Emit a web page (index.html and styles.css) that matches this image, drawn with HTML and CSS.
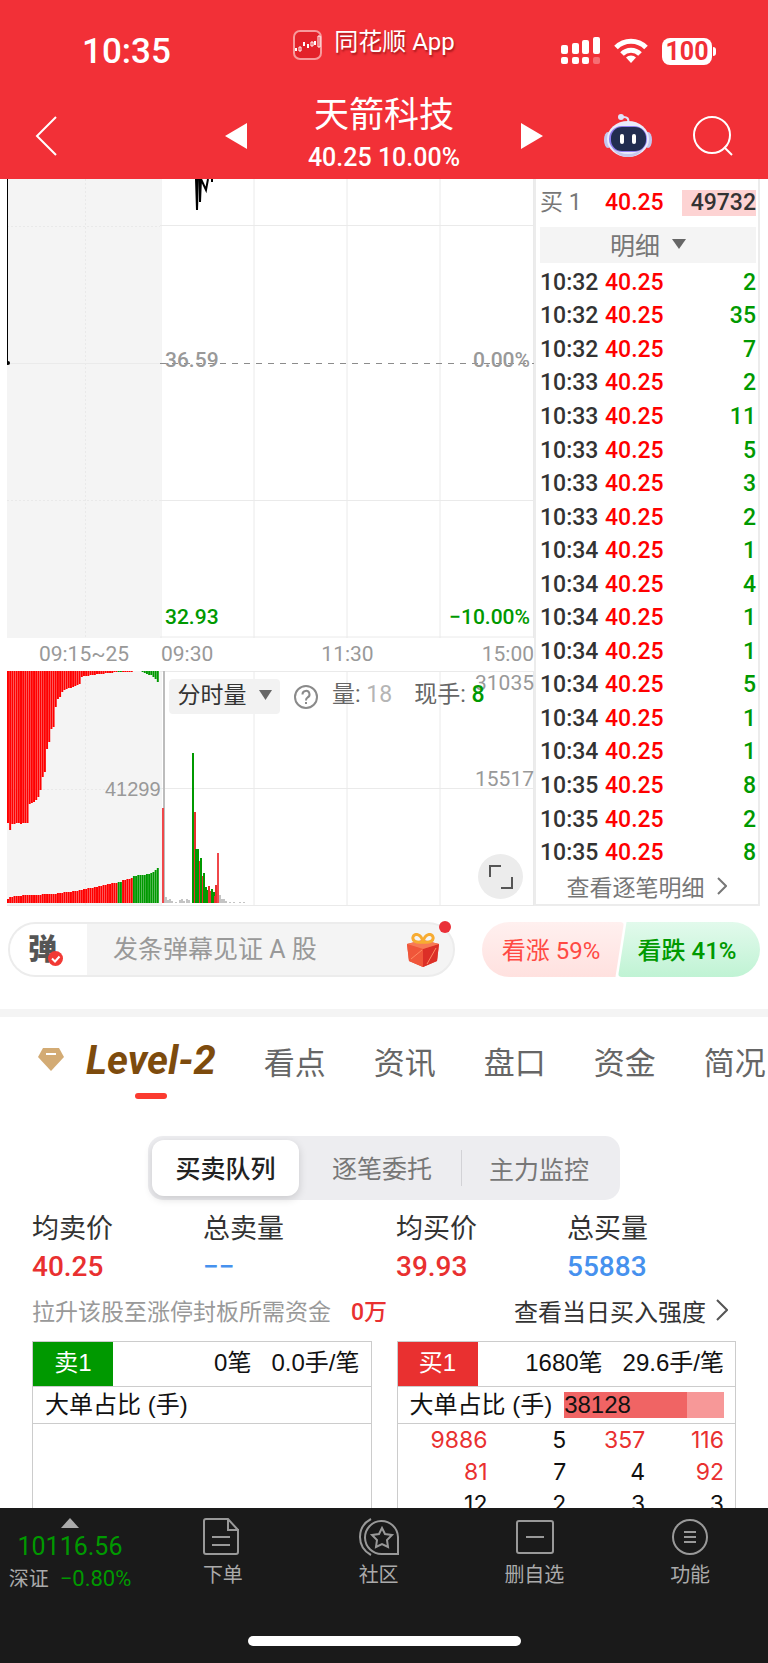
FILE: index.html
```html
<!DOCTYPE html>
<html lang="zh-CN">
<head>
    <meta charset="UTF-8">
    <meta name="viewport" content="width=device-width, initial-scale=1.0">
    <title>天箭科技</title>
    <link rel="stylesheet" href="styles.css">
</head>
<body>
<header class="top">
    <div class="status">
        <span class="clock">10:35</span>
        <span class="brand">
            <svg width="29" height="30" viewBox="0 0 29 30">
                <rect x="1" y="1" width="27" height="28" rx="6" fill="#e3222a" stroke="#f79a9c" stroke-width="2"/>
                <path d="M3 18v3M11 12v4M15 14v4M22 11v4" stroke="#fff" stroke-width="2"/>
                <path d="M6 17h2v4H6zM18 12h2v4h-2zM25 6h2v11h-2z" fill="none" stroke="#fff"/>
            </svg>
            <span>同花顺 App</span>
        </span>
        <span class="signals">
            <svg width="39" height="28" viewBox="0 0 39 28" fill="#fff">
                <rect x="0" y="8" width="7" height="9" rx="2"/>
                <rect x="11" y="6" width="7" height="11" rx="2"/>
                <rect x="21" y="3" width="7" height="14" rx="2"/>
                <rect x="32" y="0" width="7" height="17" rx="2"/>
                <rect x="0" y="20" width="7" height="7" rx="2"/>
                <rect x="11" y="20" width="7" height="7" rx="2"/>
                <rect x="21" y="20" width="7" height="7" rx="2"/>
                <rect x="32" y="20" width="7" height="7" rx="2" opacity=".3"/>
            </svg>
            <svg width="34" height="26" viewBox="0 0 34 26" fill="none" stroke="#fff" stroke-width="5">
                <path d="M2 9.500a21 21 0 0 1 30 0"/>
                <path d="M8 16a12.500 12.500 0 0 1 18 0"/>
                <path d="M17 25l-5-5.500a7 7 0 0 1 10 0z" fill="#fff" stroke="none"/>
            </svg>
            <span class="battery">100</span>
        </span>
    </div>
    <div class="titlebar">
        <button class="back" aria-label="返回">
            <svg width="24" height="40" viewBox="0 0 24 40" fill="none" stroke="#fff" stroke-width="2"><path d="M21 1L2 20l19 19"/></svg>
        </button>
        <div class="stock">
            <button aria-label="上一只"><svg width="22" height="26" viewBox="0 0 22 26" fill="#fff"><path d="M22 0v26L0 13z"/></svg></button>
            <div>
                <h1>天箭科技</h1>
                <p>40.25 10.00%</p>
            </div>
            <button aria-label="下一只"><svg width="22" height="26" viewBox="0 0 22 26" fill="#fff"><path d="M0 0v26l22-13z"/></svg></button>
        </div>
        <div class="tools">
            <button aria-label="助手">
                <svg width="48" height="44" viewBox="0 0 48 44">
                    <path d="M18 3q8-1 6 7" fill="none" stroke="#dfe3fa" stroke-width="2"/>
                    <circle cx="17" cy="3" r="3" fill="#dfe3fa"/>
                    <ellipse cx="4" cy="26" rx="4" ry="8" fill="#c3c6ee"/>
                    <ellipse cx="44" cy="26" rx="4" ry="8" fill="#c3c6ee"/>
                    <ellipse cx="24" cy="25" rx="21" ry="18" fill="#e9ebfb"/>
                    <path d="M8 34q16 12 32 0-6 9-16 9T8 34" fill="#c5c9ee"/>
                    <rect x="5" y="12" width="38" height="26" rx="13" fill="#8d7df0"/>
                    <rect x="7" y="13" width="35" height="24" rx="11" fill="#222d50"/>
                    <rect x="16" y="20" width="4" height="10" rx="2" fill="#fff"/>
                    <rect x="28" y="20" width="4" height="10" rx="2" fill="#fff"/>
                </svg>
            </button>
            <button aria-label="搜索">
                <svg width="40" height="40" viewBox="0 0 40 40" fill="none" stroke="#fff" stroke-width="2"><circle cx="19" cy="19" r="18"/><path d="M31 31l8 8"/></svg>
            </button>
        </div>
    </div>
</header>

<main>
    <section class="market">
        <div class="charts">
            <div class="price-chart">
                <svg viewBox="0 0 527 459" preserveAspectRatio="none">
                    <rect width="153" height="459" fill="#f4f4f4"/>
                    <g stroke="#e9e9e9" stroke-dasharray="2 2">
                        <path d="M78.500 0v459M0 47.500h153M0 321.500h153"/>
                    </g>
                    <g stroke="#eaeaea">
                        <path d="M0 184.500h153M153 46.500h374M153 321.500h374M153 458h374" />
                        <path d="M154 0v459M247 0v459M340 0v459M433 0v459M526.500 0v459"/>
                    </g>
                    <path d="M153 184.500h374" stroke="#8c8c8c" stroke-dasharray="6 6"/>
                    <path d="M.500 0v184" stroke="#000"/>
                    <circle cx="1" cy="184" r="2"/>
                    <path d="M189 0l1 31 1-31 2 0 0 23 1-23 5 11 2-11M205 0v3" fill="none" stroke="#000" stroke-width="2"/>
                </svg>
                <span class="label mid-left">36.59</span>
                <span class="label mid-right">0.00%</span>
                <span class="label low-left">32.93</span>
                <span class="label low-right">−10.00%</span>
            </div>
            <div class="axis">
                <span class="auction">09:15~25</span>
                <span class="session"><span>09:30</span><span>11:30</span><span>15:00</span></span>
            </div>
            <div class="volume-chart">
                <svg id="volume" viewBox="0 0 527 235" preserveAspectRatio="none">
                    <rect width="153" height="235" fill="#f4f4f4"/>
                    <path d="M78.500 0v235M0 118.500h153" stroke="#e9e9e9" stroke-dasharray="2 2"/>
                    <path d="M154 0v235M247 0v235M340 0v235M433 0v235M526.500 0v235M153 .500h374M153 117.500h374M0 234.500h527" stroke="#eaeaea"/>
                    <path d="M157 0v232" stroke="#bdbdbd" stroke-width="2"/>
                </svg>
                <span class="vol-auction">41299</span>
                <span class="vol-max">31035</span>
                <span class="vol-half">15517</span>
                <div class="vol-tools">
                    <button class="picker">分时量 <svg width="13" height="10" viewBox="0 0 13 10"><path d="M0 0h13L6.500 10z" fill="#666"/></svg></button>
                    <svg width="24" height="24" viewBox="0 0 24 24" fill="none" stroke="#8a8a8a" stroke-width="2">
                        <circle cx="12" cy="12" r="11"/>
                        <path d="M8.500 9.500a3.500 3.500 0 1 1 5 3q-1.500 1-1.500 3M12 17v2"/>
                    </svg>
                    <span class="vol-now">量: <i>18</i></span>
                    <span>现手: <b>8</b></span>
                </div>
                <button class="expand" aria-label="全屏">
                    <svg width="24" height="24" viewBox="0 0 24 24" fill="none" stroke="#555" stroke-width="2"><path d="M1 12V1h11M23 12v11H12"/></svg>
                </button>
            </div>
        </div>

        <aside class="quotes">
            <div class="bid"><span>买 1</span><b>40.25</b><span class="bid-qty">49732</span></div>
            <button class="detail">明细 <svg width="14" height="10" viewBox="0 0 14 10"><path d="M0 0h14L7 10z" fill="#666"/></svg></button>
            <table class="ticks">
                <tbody>
                <tr><td>10:32</td><td>40.25</td><td>2</td></tr>
                <tr><td>10:32</td><td>40.25</td><td>35</td></tr>
                <tr><td>10:32</td><td>40.25</td><td>7</td></tr>
                <tr><td>10:33</td><td>40.25</td><td>2</td></tr>
                <tr><td>10:33</td><td>40.25</td><td>11</td></tr>
                <tr><td>10:33</td><td>40.25</td><td>5</td></tr>
                <tr><td>10:33</td><td>40.25</td><td>3</td></tr>
                <tr><td>10:33</td><td>40.25</td><td>2</td></tr>
                <tr><td>10:34</td><td>40.25</td><td>1</td></tr>
                <tr><td>10:34</td><td>40.25</td><td>4</td></tr>
                <tr><td>10:34</td><td>40.25</td><td>1</td></tr>
                <tr><td>10:34</td><td>40.25</td><td>1</td></tr>
                <tr><td>10:34</td><td>40.25</td><td>5</td></tr>
                <tr><td>10:34</td><td>40.25</td><td>1</td></tr>
                <tr><td>10:34</td><td>40.25</td><td>1</td></tr>
                <tr><td>10:35</td><td>40.25</td><td>8</td></tr>
                <tr><td>10:35</td><td>40.25</td><td>2</td></tr>
                <tr><td>10:35</td><td>40.25</td><td>8</td></tr>
                </tbody>
            </table>
            <a class="more" href="#">查看逐笔明细 <svg width="10" height="18" viewBox="0 0 10 18" fill="none" stroke="#777" stroke-width="2"><path d="M1 1l8 8-8 8"/></svg></a>
        </aside>
    </section>

    <section class="social">
        <div class="danmu">
            <button class="danmu-switch" aria-label="弹幕">
                弹
                <svg width="15" height="15" viewBox="0 0 15 15"><circle cx="7.500" cy="7.500" r="7.500" fill="#f23a35"/><path d="M4 7.500l3 3 4.500-5" fill="none" stroke="#fff" stroke-width="2"/></svg>
            </button>
            <input type="text" aria-label="发弹幕" placeholder="发条弹幕见证 A 股">
            <svg class="gift" width="32" height="34" viewBox="0 0 32 34">
                <path d="M0 11l16-4 16 4-2 17-14 6-14-6z" fill="#ea4a31"/>
                <path d="M0 11l16 5v18L2 28z" fill="#f0563a"/>
                <path d="M32 11l-16 5v18l14-6z" fill="#dc2f27"/>
                <path d="M0 11l16-4 16 4-16 5z" fill="#f77a55"/>
                <path d="M4 26l11-9M20 31l9-16" stroke="#ff8a63" stroke-width="1"/>
                <path d="M16 9C9 10 5 8 6 4s8-4 10 5c2-9 9-9 10-5s-3 6-10 5" fill="none" stroke="#f7ac32" stroke-width="3"/>
            </svg>
            <i class="dot"></i>
        </div>
        <div class="vote">
            <button class="up">看涨 59%</button>
            <button class="down">看跌 41%</button>
        </div>
    </section>

    <nav class="tabs">
        <a class="level2" href="#">
            <svg width="28" height="26" viewBox="0 0 28 26"><path d="M6 1h16l5 9-13 14L1 10z" fill="#d3ab74"/><path d="M9 7h10" stroke="#fff" stroke-width="2"/></svg>
            <span>Level-2</span>
        </a>
        <a href="#">看点</a>
        <a href="#">资讯</a>
        <a href="#">盘口</a>
        <a href="#">资金</a>
        <a href="#">简况</a>
    </nav>

    <div class="segment">
        <button class="active">买卖队列</button>
        <button class="middle">逐笔委托</button>
        <button class="last">主力监控</button>
    </div>

    <section class="queue">
        <dl class="stats">
            <div><dt>均卖价</dt><dd class="red">40.25</dd></div>
            <div><dt>总卖量</dt><dd class="blue">−−</dd></div>
            <div><dt>均买价</dt><dd class="red">39.93</dd></div>
            <div><dt>总买量</dt><dd class="blue">55883</dd></div>
        </dl>
        <div class="hint">
            <span>拉升该股至涨停封板所需资金<b>0万</b></span>
            <a href="#">查看当日买入强度 <svg width="12" height="22" viewBox="0 0 12 22" fill="none" stroke="#555" stroke-width="2"><path d="M1 1l10 10L1 21"/></svg></a>
        </div>
        <div class="cards">
            <div class="card">
                <div class="card-head"><span class="tag sell">卖1</span><span>0笔</span><span>0.0手/笔</span></div>
                <div class="card-ratio">大单占比 (手)</div>
            </div>
            <div class="card">
                <div class="card-head"><span class="tag buy">买1</span><span>1680笔</span><span>29.6手/笔</span></div>
                <div class="card-ratio">大单占比 (手) <span class="ratio">38128</span></div>
                <table class="orders">
                    <tbody>
                    <tr><td class="big">9886</td><td>5</td><td class="big">357</td><td class="big">116</td></tr>
                    <tr><td class="big">81</td><td>7</td><td>4</td><td class="big">92</td></tr>
                    <tr><td>12</td><td>2</td><td>3</td><td>3</td></tr>
                    </tbody>
                </table>
            </div>
        </div>
    </section>
</main>

<footer class="bottom">
    <div class="bottom-row">
        <a class="index" href="#">
            <svg width="18" height="10" viewBox="0 0 18 10"><path d="M9 0l9 10H0z" fill="#aaa"/></svg>
            <b>10116.56</b>
            <span>深证 <em>−0.80%</em></span>
        </a>
        <a href="#">
            <svg width="40" height="38" viewBox="0 0 40 38" fill="none" stroke="#999" stroke-width="2">
                <path d="M3 1h22l10 11v22q0 2-2 2H3q-2 0-2-2V3q0-2 2-2zM25 1v11h11M9 19h18M9 27h18"/>
            </svg>
            下单
        </a>
        <a href="#">
            <svg width="40" height="38" viewBox="0 0 40 38" fill="none" stroke="#999" stroke-width="2">
                <path d="M39 36H23a16.500 16.500 0 1 1 16-17zM12 1Q1 7 1 19t11 18"/>
                <path d="M23 10l3 6 7 1-5 5 1 7-6-3-6 3 1-7-5-5 7-1z"/>
            </svg>
            社区
        </a>
        <a href="#">
            <svg width="40" height="38" viewBox="0 0 40 38" fill="none" stroke="#999" stroke-width="2">
                <rect x="3" y="3" width="36" height="32" rx="2"/><path d="M12 19h18"/>
            </svg>
            删自选
        </a>
        <a href="#">
            <svg width="40" height="38" viewBox="0 0 40 38" fill="none" stroke="#999" stroke-width="2">
                <circle cx="20" cy="19" r="17"/><path d="M14 14h12M14 19h12M14 24h12"/>
            </svg>
            功能
        </a>
    </div>
    <div class="home-bar"></div>
</footer>

<script src="script.js"></script>
</body>
</html>
```
FILE: styles.css
```css
* {
    box-sizing: border-box;
}
body {
    margin: 0;
    height: 100vh;
    display: flex;
    flex-direction: column;
    overflow: hidden;
    background: white;
    color: #333;
    font-family: Roboto, "Noto Sans CJK SC", sans-serif;
}
button {
    padding: 0;
    border: none;
    background: none;
    color: inherit;
    font: inherit;
    cursor: pointer;
}
a {
    color: inherit;
    text-decoration: none;
}
svg {
    display: block;
    flex-shrink: 0;
}
table {
    border-collapse: collapse;
}

/* header */
.top {
    flex-shrink: 0;
    background: #f23037;
    color: white;
}
.status {
    height: 92px;
    padding: 10px 56px 0 82px;
    display: grid;
    grid-template-columns: 1fr auto 1fr;
    align-items: center;
}
.clock {
    font-size: 35px;
    font-weight: 500;
}
.brand {
    display: flex;
    align-items: center;
    gap: 12px;
    padding-bottom: 12px;
    margin-right: 46px;
    font-size: 24px;
    line-height: 30px;
    white-space: nowrap;
    text-shadow: 1px 2px 2px rgba(90, 0, 0, 0.5);
}
.brand span {
    padding-bottom: 6px;
}
.signals {
    display: flex;
    justify-content: flex-end;
    align-items: center;
    gap: 14px;
}
.battery {
    position: relative;
    width: 50px;
    height: 27px;
    border-radius: 8px;
    background: white;
    color: #f23037;
    font-size: 25px;
    font-weight: 700;
    line-height: 28px;
    text-align: center;
}
.battery::after {
    content: "";
    position: absolute;
    left: 51px;
    top: 9px;
    width: 3px;
    height: 9px;
    border-radius: 0 3px 3px 0;
    background: white;
}
.titlebar {
    height: 87px;
    padding: 0 35px;
    display: grid;
    grid-template-columns: 1fr 318px 1fr;
    align-items: center;
}
.back {
    justify-self: start;
}
.stock {
    display: flex;
    justify-content: space-between;
    align-items: center;
    text-align: center;
}
.stock h1 {
    margin: 0;
    font-size: 35px;
    font-weight: 400;
    line-height: 44px;
}
.stock p {
    margin: 0;
    font-size: 25px;
    font-weight: 500;
    line-height: 40px;
}
.tools {
    display: flex;
    justify-content: flex-end;
    align-items: center;
    gap: 41px;
}

main {
    flex: 1;
    min-height: 0;
    overflow: hidden;
}
.market {
    display: flex;
    padding: 0 8px 0 7px;
}
.charts {
    flex: 1;
    min-width: 0;
    color: #999;
    font-size: 21px;
}
.charts > div > svg:first-child {
    width: 100%;
    height: 100%;
}
.price-chart {
    position: relative;
    height: 459px;
    font-weight: 500;
}
.label {
    position: absolute;
    line-height: 28px;
}
.mid-left {
    left: 158px;
    top: 167px;
}
.mid-right {
    right: 4px;
    top: 167px;
}
.low-left {
    left: 158px;
    bottom: 7px;
    color: #009900;
}
.low-right {
    right: 4px;
    bottom: 7px;
    color: #009900;
}
.axis {
    display: flex;
    height: 33px;
    line-height: 33px;
}
.auction {
    width: 154px;
    text-align: center;
}
.session {
    flex: 1;
    display: flex;
    justify-content: space-between;
}
.volume-chart {
    position: relative;
    height: 235px;
}
.vol-auction, .vol-max, .vol-half {
    position: absolute;
    line-height: 24px;
}
.vol-auction {
    left: 98px;
    top: 106px;
    font-size: 20px;
    font-family: "Liberation Sans", sans-serif;
}
.vol-max {
    right: 0;
    top: 0;
}
.vol-half {
    right: 0;
    top: 96px;
}
.vol-tools {
    position: absolute;
    left: 162px;
    top: 8px;
    display: flex;
    align-items: center;
    gap: 14px;
    height: 35px;
    color: #666;
    font-size: 23px;
    line-height: 31px;
    white-space: nowrap;
}
.vol-tools span {
    padding-bottom: 4px;
}
.picker {
    display: flex;
    align-items: center;
    justify-content: center;
    gap: 12px;
    width: 111px;
    height: 35px;
    padding-bottom: 3px;
    border-radius: 4px;
    background: #f2f2f2;
    color: #333;
}
.vol-now {
    margin-right: 8px;
}
.vol-now i {
    color: #b5b5b5;
    font-style: normal;
}
.vol-tools b {
    color: #009900;
    font-weight: 500;
}
.expand {
    position: absolute;
    right: 11px;
    bottom: 7px;
    width: 45px;
    height: 45px;
    display: flex;
    align-items: center;
    justify-content: center;
    border-radius: 50%;
    background: #ececec;
}

/* tick list */
.quotes {
    width: 226px;
    padding: 0 2px 0 4px;
    border: 2px solid #ececec;
    border-top: none;
    font-size: 23px;
    font-weight: 500;
}
.bid {
    display: flex;
    align-items: center;
    height: 48px;
    line-height: 48px;
}
.bid span:first-child {
    width: 65px;
    color: #777;
    font-weight: 400;
    white-space: nowrap;
}
.bid b {
    width: 77px;
    color: #ff0000;
    font-weight: 500;
}
.bid-qty {
    flex: 1;
    height: 26px;
    line-height: 26px;
    background: #fdd3d3;
    text-align: right;
}
.detail {
    display: flex;
    align-items: center;
    justify-content: center;
    gap: 12px;
    width: 100%;
    height: 36px;
    padding-bottom: 2px;
    background: #f4f4f4;
    color: #777;
    font-size: 25px;
    font-weight: 400;
}
.ticks {
    width: 100%;
    height: 604px;
    margin-top: 3px;
}
.ticks td {
    padding: 0;
    line-height: 28px;
}
.ticks td:nth-child(1) {
    width: 65px;
}
.ticks td:nth-child(2) {
    color: #ff0000;
}
.ticks td:nth-child(3) {
    color: #009900;
    text-align: right;
}
.more {
    display: flex;
    align-items: center;
    justify-content: center;
    gap: 12px;
    height: 34px;
    padding: 0 3px 3px 0;
    color: #777;
    font-weight: 400;
}

/* danmu + vote */
.social {
    display: flex;
    justify-content: space-between;
    padding: 16px 8px 32px;
    border-bottom: 8px solid #f4f4f4;
}
.danmu {
    position: relative;
    display: flex;
    align-items: center;
    width: 447px;
    height: 55px;
    border: 2px solid #ececec;
    border-radius: 28px;
    background: #f4f4f4;
}
.danmu-switch {
    position: relative;
    width: 77px;
    height: 51px;
    border-radius: 26px 0 0 26px;
    background: white;
    color: #555;
    font-size: 29px;
    font-weight: 900;
    line-height: 48px;
    padding-right: 12px;
}
.danmu-switch svg {
    position: absolute;
    left: 38px;
    top: 27px;
}
.danmu input {
    flex: 1;
    min-width: 0;
    padding: 0 0 0 26px;
    border: none;
    outline: none;
    background: none;
    font: inherit;
    font-size: 25px;
}
.danmu input::placeholder {
    color: #999;
}
.gift {
    margin-right: 14px;
}
.dot {
    position: absolute;
    right: 2px;
    top: -3px;
    width: 12px;
    height: 12px;
    border-radius: 50%;
    background: #ea3038;
}
.vote {
    display: flex;
    width: 278px;
}
.vote button {
    width: 142px;
    height: 55px;
    padding: 0 4px 3px 0;
    font-size: 24px;
}
.vote .up {
    border-radius: 28px 4px 4px 28px;
    background: linear-gradient(#fff0ef, #ffe1df);
    clip-path: polygon(0 0, 100% 0, 94% 100%, 0 100%);
    color: #ff4a43;
}
.vote .down {
    margin-left: -6px;
    border-radius: 4px 28px 28px 4px;
    background: linear-gradient(#e2faec, #c0f3d4);
    clip-path: polygon(6% 0, 100% 0, 100% 100%, 0 100%);
    color: #009900;
    font-weight: 500;
}

/* tabs */
.tabs {
    display: flex;
    align-items: center;
    gap: 48px;
    height: 90px;
    padding: 0 0 4px 37px;
    overflow: hidden;
    color: #666;
    font-size: 31px;
    white-space: nowrap;
}
.level2 {
    position: relative;
    display: flex;
    align-items: center;
    gap: 21px;
    color: #7d4b0d;
    font-size: 40px;
    font-style: italic;
    font-weight: 700;
}
.level2::after {
    content: "";
    position: absolute;
    left: 98px;
    bottom: -15px;
    width: 32px;
    height: 6px;
    border-radius: 3px;
    background: #fb3b30;
}
.segment {
    display: flex;
    align-items: center;
    width: 472px;
    height: 64px;
    margin: 29px auto 0;
    padding: 4px;
    border-radius: 15px;
    background: #ededf0;
    color: #777;
    font-size: 25px;
}
.segment button {
    height: 56px;
    padding-bottom: 2px;
}
.segment .active {
    width: 147px;
    border-radius: 12px;
    background: white;
    color: #222;
    font-weight: 500;
    box-shadow: 0 3px 8px rgba(0, 0, 0, 0.15);
}
.segment .middle {
    width: 162px;
    padding-left: 4px;
}
.segment .last {
    flex: 1;
    height: 36px;
    border-left: 1px solid #d2d2d6;
}

/* queue */
.queue {
    padding: 9px 32px 0;
}
.stats {
    display: grid;
    grid-template-columns: 171px 193px 171px 1fr;
    margin: 0;
}
.stats dt {
    font-size: 27px;
    line-height: 40px;
}
.stats dd {
    margin: 0;
    font-size: 28px;
    font-weight: 500;
    line-height: 36px;
}
.red {
    color: #e93030;
}
.blue {
    color: #4691ee;
}
.hint {
    display: flex;
    justify-content: space-between;
    align-items: center;
    height: 56px;
    padding-bottom: 6px;
    color: #999;
    font-size: 23px;
}
.hint b {
    margin-left: 20px;
    color: #e93030;
    font-weight: 500;
}
.hint a {
    display: flex;
    align-items: center;
    gap: 10px;
    padding-right: 8px;
    color: #333;
    font-size: 24px;
}
.cards {
    display: grid;
    grid-template-columns: 1fr 1fr;
    gap: 25px;
    color: #111;
    font-family: "Liberation Sans", "Noto Sans CJK SC", sans-serif;
    font-size: 24px;
}
.card {
    border: 1px solid #ccc;
    min-height: 220px;
}
.card-head {
    display: flex;
    justify-content: flex-end;
    gap: 20px;
    height: 45px;
    padding-right: 11px;
    border-bottom: 1px solid #ccc;
    line-height: 42px;
}
.tag {
    width: 80px;
    margin-right: auto;
    color: white;
    text-align: center;
}
.sell {
    background: #009900;
}
.buy {
    background: #e93030;
}
.card-ratio {
    display: flex;
    align-items: center;
    gap: 12px;
    height: 37px;
    padding: 0 11px 0 12px;
    border-bottom: 1px solid #ccc;
    line-height: 32px;
    white-space: nowrap;
}
.ratio {
    flex: 1;
    height: 26px;
    background: linear-gradient(to right, #f06464 77%, #f79898 77%);
    line-height: 26px;
}
.orders {
    width: 100%;
    table-layout: fixed;
    font-family: Inter, sans-serif;
    font-size: 23px;
}
.orders td {
    height: 32px;
    padding: 0 11px 0 0;
    text-align: right;
}
.orders td:first-child {
    width: 101px;
}
.orders .big {
    color: #e93030;
}

/* bottom bar */
.bottom {
    flex-shrink: 0;
    height: 155px;
    background: #1a1a1a;
    color: #aaa;
    font-size: 20px;
    display: flex;
    flex-direction: column;
    justify-content: space-between;
}
.bottom-row {
    display: grid;
    grid-template-columns: 145px repeat(4, 1fr);
    padding-top: 10px;
}
.bottom-row a {
    display: flex;
    flex-direction: column;
    align-items: center;
    gap: 4px;
    line-height: 30px;
}
.bottom-row .index {
    gap: 2px;
    padding-right: 5px;
}
.index b {
    font-size: 25px;
    font-weight: 400;
    line-height: 34px;
    color: #009900;
}
.index span {
    line-height: 26px;
    white-space: nowrap;
}
.index em {
    margin-left: 6px;
    font-size: 22px;
    font-style: normal;
    color: #009900;
}
.home-bar {
    width: 273px;
    height: 10px;
    margin: 0 auto 17px;
    border-radius: 5px;
    background: white;
}
```
FILE: script.js
```js
const RED = '#ff0000';
const GREEN = '#009900';
const BASE = 232;
const svg = document.getElementById('volume');

function bar(x, y, width, height, color) {
    const rect = document.createElementNS('http://www.w3.org/2000/svg', 'rect');
    rect.setAttribute('x', x);
    rect.setAttribute('y', y);
    rect.setAttribute('width', width);
    rect.setAttribute('height', height);
    rect.setAttribute('fill', color);
    svg.appendChild(rect);
}

// Call auction: unmatched volume hangs from the top, matched volume stands on the base
const unmatched = [152, 159, 153, 153, 152, 152, 153, 152, 152, 152, 133, 132, 131, 129, 126, 119, 106, 101, 78, 71,
    58, 56, 36, 28, 26, 21, 19, 18, 17, 17, 16, 15, 14, 13, 6, 5, 5, 5, 4, 4,
    4, 3, 3, 3, 3, 2, 2, 2, 2, 1, 1, 1, 1, 1, 1, 1, 1, 1, 0, 0,
    0, 0, 1, 2, 3, 4, 4, 6, 8, 11];
const matched = [4, 6, 6, 7, 7, 7, 7, 8, 8, 8, 8, 8, 8, 8, 8, 8, 9, 9, 9, 9,
    9, 9, 9, 10, 10, 10, 11, 11, 11, 11, 12, 12, 12, 13, 13, 14, 14, 15, 15, 15,
    16, 16, 17, 17, 18, 18, 19, 19, 20, 20, 20, 21, 21, 23, 23, 24, 24, 25, 27, 27,
    28, 28, 28, 28, 29, 29, 30, 31, 33, 35];
const pitch = 152 / unmatched.length;

unmatched.forEach((value, i) => {
    const green = i === 51 || i === 52 || i > 57;
    const color = green ? GREEN : RED;
    bar(i * pitch, 0, pitch * 0.9, value, color);
    bar(i * pitch, BASE - matched[i], pitch * 0.9, matched[i], color);
});

// Intraday volume: [x, height, color]
const grey = '#c4c4c4';
const minutes = [[155, 95, '#f0474a'],
    [158, 6, grey], [160, 3, grey], [162, 4, grey], [164, 2, grey], [168, 1, grey], [172, 3, grey], [174, 4, grey],
    [176, 2, grey], [179, 4, grey], [181, 3, grey],
    [185, 150, GREEN], [187, 91, '#e93030'], [188, 54, GREEN], [190, 54, GREEN], [192, 42, '#e93030'], [193, 45, GREEN],
    [195, 27, '#e93030'], [196, 30, GREEN], [198, 16, GREEN], [199, 13, GREEN], [201, 17, '#e93030'], [203, 12, '#e93030'],
    [204, 14, GREEN], [206, 11, GREEN], [207, 7, '#e93030'], [208, 18, '#e93030'], [210, 50, '#f0474a'],
    [212, 8, grey], [214, 4, grey], [216, 4, grey], [218, 2, grey], [222, 1, grey], [226, 1, grey], [232, 1, grey], [236, 1, grey]];

minutes.forEach(([x, height, color]) => bar(x, BASE - height, 2, height, color));
```
